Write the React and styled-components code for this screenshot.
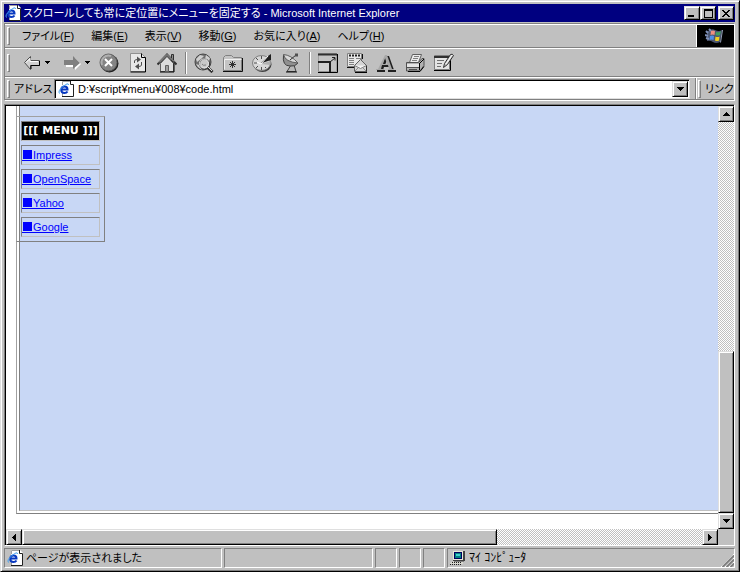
import React from "react";
import styled, { createGlobalStyle, css } from "styled-components";

const GlobalStyle = createGlobalStyle`
  * { box-sizing: border-box; }
  html, body, #root { height: 100%; }
  body {
    margin: 0;
    background: #c0c0c0;
    overflow: hidden;
  }
  body, button, input {
    font-family: "Liberation Sans", "Noto Sans CJK JP", sans-serif;
    font-size: 11px;
    line-height: 16px;
    font-feature-settings: "palt";
    color: #000;
  }
  u { text-underline-offset: 1px; }
`;

const raised = css`
  border: 1px solid;
  border-color: #dfdfdf #000 #000 #dfdfdf;
  box-shadow: inset 1px 1px #fff, inset -1px -1px #808080;
`;

const sunken = css`
  border: 1px solid;
  border-color: #808080 #fff #fff #808080;
`;

const dither = css`
  background: repeating-conic-gradient(#fff 0 25%, #c0c0c0 0 50%) 0 0 / 2px 2px;
`;

const Window = styled.div`
  ${raised}
  display: flex;
  flex-direction: column;
  height: 100vh;
  padding: 3px 4px 3px 3px;
  background: #c0c0c0;
`;

const TitleBar = styled.header`
  display: flex;
  align-items: center;
  gap: 2px;
  height: 18px;
  padding: 0 1px;
  background: #000080;
  color: #fff;
`;

const Title = styled.h1`
  flex: 1;
  margin: 0;
  font-size: 11px;
  font-weight: normal;
  line-height: 18px;
  white-space: nowrap;
  overflow: hidden;
`;

const TitleButtons = styled.div`
  display: flex;
`;

const TitleButton = styled.button`
  ${raised}
  display: grid;
  place-items: center;
  width: 16px;
  height: 14px;
  padding: 0;
  margin-left: ${({ $gap }) => ($gap ? "2px" : "0")};
  background: #c0c0c0;
`;

const Rebar = styled.div`
  ${sunken}
  margin-top: 1px;
`;

const Band = styled.div`
  display: flex;
  align-items: center;
  height: ${({ $height }) => $height};
  border-top: 1px solid #fff;
  border-bottom: 1px solid #808080;
`;

const Gripper = styled.span`
  flex: none;
  width: 3px;
  height: 18px;
  margin: 0 4px 0 2px;
  border: 1px solid;
  border-color: #fff #808080 #808080 #fff;
`;

const Menus = styled.nav`
  flex: 1;
  display: flex;
  gap: 17px;
  padding-left: 8px;
`;

const MenuItem = styled.button`
  padding: 0;
  border: 0;
  background: none;
  white-space: nowrap;
`;

const Throbber = styled.div`
  display: grid;
  place-items: center;
  align-self: stretch;
  width: 38px;
  background: #000;
  border-left: 1px solid #fff;
`;

const ToolButton = styled.button`
  display: flex;
  align-items: center;
  justify-content: center;
  gap: 4px;
  width: ${({ $split }) => ($split ? "40px" : "29px")};
  height: 24px;
  padding: 0 0 0 ${({ $split }) => ($split ? "6px" : "0")};
  border: 0;
  background: none;
`;

const Divider = styled.span`
  width: 2px;
  height: 22px;
  margin: 0 2px 0 4px;
  border-left: 1px solid #808080;
  border-right: 1px solid #fff;
`;

const AddressLabel = styled.label`
  width: 40px;
  white-space: nowrap;
`;

const AddressField = styled.div`
  flex: 1;
  display: flex;
  align-items: center;
  height: 20px;
  padding: 0 1px 0 3px;
  background: #fff;
  border: 1px solid;
  border-color: #808080 #dfdfdf #dfdfdf #808080;
  box-shadow: inset 1px 1px #000;
`;

const AddressInput = styled.input`
  flex: 1;
  min-width: 0;
  height: 16px;
  padding: 0 0 0 4px;
  border: 0;
  outline: 0;
  background: none;
`;

const LinksBand = styled.div`
  display: flex;
  align-items: center;
  align-self: stretch;
  width: 39px;
  margin-left: 5px;
  border-left: 1px solid #808080;
  box-shadow: inset 1px 0 #fff;
  white-space: nowrap;
`;

const Viewport = styled.main`
  flex: 1;
  min-height: 0;
  display: grid;
  grid-template: minmax(0, 1fr) 16px / minmax(0, 1fr) 16px;
  margin-top: 3px;
  border: 1px solid;
  border-color: #808080 #fff #fff #808080;
  box-shadow: inset 1px 1px #000;
  padding: 1px 0 0 1px;
`;

const Page = styled.section`
  position: relative;
  display: flex;
  overflow: hidden;
  padding: 0 0 15px 10px;
  background: #fff;
`;

const PageFrame = styled.div`
  flex: 1;
  display: flex;
  padding: 0 0 2px 2px;
  border-left: 1px solid #a0a0a0;
  border-bottom: 1px solid #808080;
`;

const PageBody = styled.div`
  flex: 1;
  background: #c8d7f5;
  border-left: 1px solid #808080;
  border-bottom: 1px solid #c0c0c0;
`;

const FixedMenu = styled.nav`
  position: absolute;
  top: 10px;
  left: 10px;
  display: flex;
  flex-direction: column;
  gap: 4px;
  width: 89px;
  padding: 4px;
  border: 1px solid;
  border-color: #a0a0a0 #808080 #808080 #a0a0a0;
`;

const MenuCell = styled.div`
  height: 20px;
  padding: 1px 0;
  border: 1px solid;
  border-color: #808080 #c0c0c0 #c0c0c0 #808080;
  white-space: nowrap;
`;

const MenuHeading = styled(MenuCell)`
  background: #000;
  color: #fff;
  font-family: "DejaVu Sans", sans-serif;
  font-weight: bold;
  text-align: center;
`;

const MenuLink = styled.a`
  display: flex;
  align-items: center;
  color: #0000ff;
  text-decoration: none;
  line-height: 16px;
`;

const LinkText = styled.span`
  text-decoration: underline;
`;

const Bullet = styled.span`
  width: 11px;
  height: 12px;
  border-bottom: 1px solid #0000ff;
  &::before {
    content: "";
    display: block;
    width: 9px;
    height: 9px;
    margin: 1px 0 0 1px;
    background: #0000ff;
  }
`;

const Scrollbar = styled.div`
  ${dither}
  display: flex;
  flex-direction: ${({ $vertical }) => ($vertical ? "column" : "row")};
`;

const ScrollButton = styled.button`
  ${raised}
  flex: none;
  display: grid;
  place-items: center;
  width: 16px;
  height: 16px;
  padding: 0;
  background: #c0c0c0;
`;

const Track = styled.div`
  flex: ${({ $share }) => $share};
`;

const Thumb = styled.div`
  ${raised}
  flex: ${({ $share }) => $share};
  background: #c0c0c0;
`;

const StatusBar = styled.footer`
  display: flex;
  gap: 2px;
  height: 20px;
  margin-top: 2px;
`;

const StatusPanel = styled.div`
  ${sunken}
  display: flex;
  align-items: center;
  gap: 3px;
  flex: ${({ $flex }) => $flex};
  min-width: 0;
  padding-left: 2px;
  white-space: nowrap;
`;

const ZoneName = styled.span`
  font-size: 12px;
`;

const ResizeGrip = styled.svg`
  align-self: flex-end;
  margin-left: auto;
`;

const Ink = styled.svg`
  display: block;
  flex: none;
`;

const Glyph = ({ w, h, d }) => (
  <Ink width={w} height={h} shapeRendering="crispEdges" aria-hidden="true">
    <path d={d} fill="#000" />
  </Ink>
);

const arrows = {
  up: [7, 4, "M3 0h1v1h1v1h1v1h1v1H0V3h1V2h1V1h1z"],
  down: [7, 4, "M0 0h7v1H6v1H5v1H4v1H3V3H2V2H1V1H0z"],
  left: [4, 7, "M3 0h1v7H3V6H2V5H1V4H0V3h1V2h1V1h1z"],
  right: [4, 7, "M0 0h1v1h1v1h1v1h1v1H3v1H2v1H1v1H0z"],
  caret: [5, 3, "M0 0h5v1H4v1H3v1H2V2H1V1H0z"],
};

const Arrow = ({ to }) => {
  const [w, h, d] = arrows[to];
  return <Glyph w={w} h={h} d={d} />;
};

const PageIcon = () => (
  <Ink width="16" height="16" viewBox="0 0 16 16" aria-hidden="true">
    <path d="M4 0h9l3 3v13H4z" fill="#fff" />
    <path d="M4.500 4V.5h8M4.500 12v3.500" fill="none" stroke="#a0a0a0" />
    <path d="M12.500 0v3.500h3V15.500H4" fill="none" stroke="#202020" />
    <path d="M3 8.500h6.500q0-3-3-3t-3.300 3q0 3.500 3.300 3.500q2 0 3-1.500" fill="none" stroke="#0838c0" strokeWidth="2" />
    <path d="M1.500 12.500Q-.5 10 5 5.500T10.500 4" fill="none" stroke="#40a0f0" />
  </Ink>
);

const ComputerIcon = () => (
  <Ink width="16" height="16" viewBox="0 0 16 16" shapeRendering="crispEdges" aria-hidden="true">
    <path d="M3 1h12v10H3z" fill="#404040" />
    <path d="M3 1h10v9H3z" fill="#e8e8d8" />
    <path d="M4 2h8v7H4z" fill="#000060" />
    <path d="M5 3h6v5H5z" fill="#008080" />
    <path d="M6 4h4v2H6z" fill="#40d0d0" />
    <path d="M3 11h11v1h-1v2H0v-1h1v-1h2z" fill="#d8d8d0" />
    <path d="M2 12.500h10M0 14.500h12" stroke="#202020" strokeDasharray="1 1" />
    <path d="M4 11.500h10" stroke="#808080" />
  </Ink>
);

const FlagIcon = () => (
  <Ink width="22" height="18" viewBox="0 0 22 18" aria-hidden="true">
    <path d="M2 5q4-4 8-2q4 2 7 0l-2 12q-4 2-7 0q-3-2-6-1z" fill="#4c5670" />
    <path d="M1 4l2 2M0 8l3 1M1 11l3 1M4 2l2 2" stroke="#7f90b8" strokeWidth="2" />
    <path d="M6 4q2-1 4 0l-.5 4q-2-1-4 0z" fill="#f09080" />
    <path d="M11 5q3 1 5-1l-1 4q-2 1-4.500 0z" fill="#40a060" />
    <path d="M5 9q2-1 4 0l-.5 4q-2-1-4 0z" fill="#4f90e8" />
    <path d="M10.500 9.500q2 1 4 0l-.5 4q-2 1-4 0z" fill="#f0d020" />
    <path d="M17.500 3l-2 12.500" stroke="#98a4bc" />
  </Ink>
);

const icons = {
  back: (
    <>
      <path d="M.5 9.500l6-6v4h9v5h-9v4z" fill="#d0d0d0" stroke="#505050" />
      <path d="M7 16v-3.500h8.500V8" fill="none" stroke="#000" />
      <path d="M2 9.500l4-4v3h8" fill="none" stroke="#fff" />
    </>
  ),
  forward: (
    <>
      <path d="M1 8h9V4l6 6-6 6v-3H1z" fill="#fff" transform="translate(1 1)" />
      <path d="M0 7h9V3l7 7-7 6v-4H0z" fill="#808080" />
    </>
  ),
  stop: (
    <>
      <circle cx="10.500" cy="10.500" r="9" fill="#202020" />
      <circle cx="9.500" cy="9.500" r="8.500" fill="#848484" stroke="#606060" />
      <path d="M3 12a7 7 0 0 1 9-9" fill="none" stroke="#b0b0b0" strokeWidth="2" />
      <path d="M6 6l7 7M13 6l-7 7" stroke="#fff" strokeWidth="2" />
    </>
  ),
  refresh: (
    <>
      <path d="M2.500 .5h11l4 4v14h-15z" fill="#e8e8e8" stroke="#909090" />
      <path d="M13.500 .5v4h4v14.500h-15" fill="none" stroke="#000" />
      <path d="M6.500 10V8q0-1.500 3-1.500M13.500 9v3q0 1.500-3 1.500" fill="none" stroke="#505050" />
      <path d="M9 3.500l4 3-4 3zM11 10.500l-4 3 4 3z" fill="#505050" />
    </>
  ),
  home: (
    <>
      <path d="M14.500 1.500h2v7h-2z" fill="#909090" stroke="#303030" />
      <path d="M3.500 10.500v8h13v-8l-6.500-7z" fill="#dcdcdc" stroke="#606060" />
      <path d="M3 19h14V10" fill="none" stroke="#000" />
      <path d="M.5 11.500L10 1.500l9.500 10" fill="none" stroke="#303030" strokeWidth="2" />
      <path d="M2 9.500l8-8 7 7" fill="none" stroke="#b8b8b8" />
      <path d="M8.500 12.500h3v6h-3z" fill="#a0a0a0" stroke="#606060" />
    </>
  ),
  search: (
    <>
      <circle cx="9" cy="9" r="8" fill="#707070" stroke="#484848" />
      <path d="M2 6l4-4 4 1-3 3-4 3zM12 2l4 3-1 3-4-2zM2 11l3 1 3 5-4-3z" fill="#d0d0d0" />
      <circle cx="10.500" cy="11" r="5" fill="#c8c8c8" stroke="#303030" />
      <circle cx="10" cy="10.500" r="4.500" fill="none" stroke="#e8e8e8" />
      <path d="M14 15l4.500 4" stroke="#303030" strokeWidth="3" />
      <path d="M14 14l4 4" stroke="#e0e0e0" />
      <path d="M8 11q1 2 4 1" fill="none" stroke="#808080" />
    </>
  ),
  favorites: (
    <>
      <path d="M.5 17.500V4.500l2-2h6l2 2h8v13z" fill="#c4c4c4" stroke="#808080" />
      <path d="M1.500 16.500V6.500h17" fill="none" stroke="#f0f0f0" />
      <path d="M0 18.500h19.500V5" fill="none" stroke="#101010" />
      <path d="M9.500 8v7M6 11.500h7M7 9l5 5M12 9l-5 5" stroke="#303030" />
    </>
  ),
  history: (
    <>
      <ellipse cx="10.500" cy="11.500" rx="9" ry="7.500" fill="#404040" />
      <ellipse cx="9.500" cy="10" rx="9" ry="7.500" fill="#d8d8d8" stroke="#808080" />
      <path d="M8.500 10.500L16 3l3-2v6z" fill="#202020" />
      <path d="M9 11l9.500-3v4z" fill="#b0b0b0" />
      <path d="M9.500 3v3M2 10h3M9.500 14v3M4 5l2 2M4 15l2-2M14 15l-1-1" stroke="#505050" />
      <path d="M5 9l4 2 7-8" fill="none" stroke="#fff" />
    </>
  ),
  channels: (
    <>
      <path d="M10 12l-4 6.500h9l-2-6.500z" fill="#b8b8b8" stroke="#404040" />
      <path d="M5 19h11" stroke="#101010" />
      <path d="M2.500 2Q1 13 9 13q5 1 8-3z" fill="#909090" stroke="#404040" />
      <path d="M2.500 1.500Q4 9 17 10Q10 2 2.500 1.500z" fill="#d8d8d8" stroke="#606060" />
      <path d="M9 7l6-5" stroke="#303030" />
      <path d="M14 .5h3v3h-3z" fill="#505050" />
    </>
  ),
  fullscreen: (
    <>
      <path d="M.5 .5h18v18H.5z" fill="#c4c4c4" stroke="#a0a0a0" />
      <path d="M0 1.500h19" stroke="#303030" strokeWidth="2" />
      <path d="M19.500 1v18.500H0" fill="none" stroke="#000" />
      <path d="M.5 8.500h11v10H.5z" fill="#d0d0d0" stroke="#909090" />
      <path d="M0 9h12v10" fill="none" stroke="#202020" strokeWidth="2" />
      <path d="M12 9l5-4M14 4.500h3v3" fill="none" stroke="#202020" />
    </>
  ),
  mail: (
    <>
      <path d="M.5 .5h14v13H.5z" fill="#e8e8e8" stroke="#808080" />
      <path d="M2 2.500h11" stroke="#202020" strokeWidth="2" strokeDasharray="2 1" />
      <path d="M2 5.500h5M2 7.500h5M2 9.500h5M2 11.500h5M9 5.500h5" stroke="#808080" />
      <path d="M15.500 1v5M0 14.500h8" stroke="#101010" />
      <path d="M7.500 12.500l6-6 6 6v6h-12z" fill="#d4d4d4" stroke="#606060" />
      <path d="M7.500 12.500l6 3 6-3" fill="#f4f4f4" stroke="#808080" />
      <path d="M7.500 18.500l4-4M19.500 18.500l-4-4" stroke="#909090" />
      <path d="M8 19.500h12v-7" fill="none" stroke="#000" />
    </>
  ),
  font: (
    <>
      <path d="M10 3h3l5 14h2v2h-8v-2h2l-1-3H8l-1 3h2v2H1v-2h2zM11 7l-2 5h3z" fill="#202020" />
      <path d="M9 2h2l5 14h2v1h-6v-1h1l-1-4H6l-1 4h2v1H0v-1h2zM9 5l-2 6h4z" fill="#a8a8a8" />
    </>
  ),
  print: (
    <>
      <path d="M7.500 1.500h9l-3 8h-9z" fill="#ececec" stroke="#606060" />
      <path d="M9 3.500h5M8 5.500h5M7 7.500h5" stroke="#808080" />
      <path d="M1.500 9.500h12l3.500-4h2v7l-4 5.500h-13.500z" fill="#b0b0b0" stroke="#505050" />
      <path d="M2 11h12v3H2z" fill="#e4e4e4" />
      <path d="M14.500 10v7M3 18.500h12l4-5M15 10l4-4" fill="none" stroke="#000" />
      <path d="M2 14.500h12M4 16.500h8" stroke="#505050" />
    </>
  ),
  edit: (
    <>
      <path d="M.5 2.500h15v14H.5z" fill="#e4e4e4" stroke="#808080" />
      <path d="M0 3h16v2H0z" fill="#303030" />
      <path d="M3 7.500h7M3 10.500h5M3 13.500h4" stroke="#707070" />
      <path d="M0 17.500h16.500V6" fill="none" stroke="#000" />
      <path d="M9.500 14.500l1-4 6-9q2-1 3 1l-6 9z" fill="#c8c8c8" stroke="#303030" />
      <path d="M12 11l6-9" stroke="#fff" />
    </>
  ),
};

const ToolIcon = ({ name, width = 20 }) => (
  <Ink width={width} height="20" viewBox={`0 0 ${width} 20`} aria-hidden="true">
    {icons[name]}
  </Ink>
);

const Tool = ({ name, label }) => (
  <ToolButton type="button" aria-label={label}>
    <ToolIcon name={name} />
  </ToolButton>
);

const SplitTool = ({ name, label }) => (
  <ToolButton type="button" $split aria-label={label}>
    <ToolIcon name={name} width={17} />
    <Arrow to="caret" />
  </ToolButton>
);

const menus = [
  ["ファイル", "F"],
  ["編集", "E"],
  ["表示", "V"],
  ["移動", "G"],
  ["お気に入り", "A"],
  ["ヘルプ", "H"],
];

const navTools = [["stop", "中止"], ["refresh", "更新"], ["home", "ホーム"]];
const barTools = [["search", "検索"], ["favorites", "お気に入り"], ["history", "履歴"], ["channels", "チャンネル"]];
const pageTools = [["fullscreen", "全画面"], ["mail", "メール"], ["font", "フォント"], ["print", "印刷"], ["edit", "編集"]];
const links = ["Impress", "OpenSpace", "Yahoo", "Google"];

const renderTools = (tools) => tools.map(([name, label]) => <Tool key={name} name={name} label={label} />);

export default function App() {
  return (
    <>
      <GlobalStyle />
      <Window>
        <TitleBar>
          <PageIcon />
          <Title>スクロールしても常に定位置にメニューを固定する - Microsoft Internet Explorer</Title>
          <TitleButtons>
            <TitleButton type="button" aria-label="最小化">
              <Glyph w={8} h={8} d="M0 6h6v2H0z" />
            </TitleButton>
            <TitleButton type="button" aria-label="最大化">
              <Glyph w={9} h={9} d="M0 0h9v9H0zM1 2v6h7V2z" />
            </TitleButton>
            <TitleButton type="button" $gap aria-label="閉じる">
              <Glyph w={8} h={7} d="M0 0h2v1h1v1h2V1h1V0h2v1H7v1H6v1H5v1h1v1h1v1h1v1H6V6H5V5H3v1H2v1H0V6h1V5h1V4h1V3H2V2H1V1H0z" />
            </TitleButton>
          </TitleButtons>
        </TitleBar>

        <Rebar>
          <Band $height="24px">
            <Gripper />
            <Menus>
              {menus.map(([name, key]) => (
                <MenuItem key={key} type="button">
                  {name}(<u>{key}</u>)
                </MenuItem>
              ))}
            </Menus>
            <Throbber>
              <FlagIcon />
            </Throbber>
          </Band>
          <Band $height="29px">
            <Gripper />
            <SplitTool name="back" label="戻る" />
            <SplitTool name="forward" label="進む" />
            {renderTools(navTools)}
            <Divider />
            {renderTools(barTools)}
            <Divider />
            {renderTools(pageTools)}
          </Band>
          <Band $height="23px">
            <Gripper />
            <AddressLabel htmlFor="address">アドレス</AddressLabel>
            <AddressField>
              <PageIcon />
              <AddressInput id="address" defaultValue="D:¥script¥menu¥008¥code.html" />
              <ScrollButton type="button" aria-label="アドレス一覧">
                <Arrow to="down" />
              </ScrollButton>
            </AddressField>
            <LinksBand>
              <Gripper />
              リンク
            </LinksBand>
          </Band>
        </Rebar>

        <Viewport>
          <Page>
            <PageFrame>
              <PageBody />
            </PageFrame>
            <FixedMenu>
              <MenuHeading>[[[ MENU ]]]</MenuHeading>
              {links.map((name) => (
                <MenuCell key={name}>
                  <MenuLink href="#">
                    <Bullet />
                    <LinkText>{name}</LinkText>
                  </MenuLink>
                </MenuCell>
              ))}
            </FixedMenu>
          </Page>
          <Scrollbar $vertical>
            <ScrollButton type="button" aria-label="上へ"><Arrow to="up" /></ScrollButton>
            <Track $share={231} />
            <Thumb $share={161} />
            <ScrollButton type="button" aria-label="下へ"><Arrow to="down" /></ScrollButton>
          </Scrollbar>
          <Scrollbar>
            <ScrollButton type="button" aria-label="左へ"><Arrow to="left" /></ScrollButton>
            <Thumb $share={474} />
            <Track $share={206} />
            <ScrollButton type="button" aria-label="右へ"><Arrow to="right" /></ScrollButton>
          </Scrollbar>
        </Viewport>

        <StatusBar>
          <StatusPanel $flex="217">
            <PageIcon />
            ページが表示されました
          </StatusPanel>
          <StatusPanel $flex="147" />
          <StatusPanel $flex="0 0 22px" />
          <StatusPanel $flex="0 0 22px" />
          <StatusPanel $flex="0 0 22px" />
          <StatusPanel $flex="288">
            <ComputerIcon />
            <ZoneName>ﾏｲ ｺﾝﾋﾟｭｰﾀ</ZoneName>
            <ResizeGrip width="13" height="13" viewBox="0 0 13 13" aria-hidden="true">
              <path d="M0 13L13 0M4 13l9-9M8 13l5-5" stroke="#fff" />
              <path d="M1.500 13L13 1.500M5.500 13L13 5.500M9.500 13L13 9.500" stroke="#808080" strokeWidth="2" />
            </ResizeGrip>
          </StatusPanel>
        </StatusBar>
      </Window>
    </>
  );
}
